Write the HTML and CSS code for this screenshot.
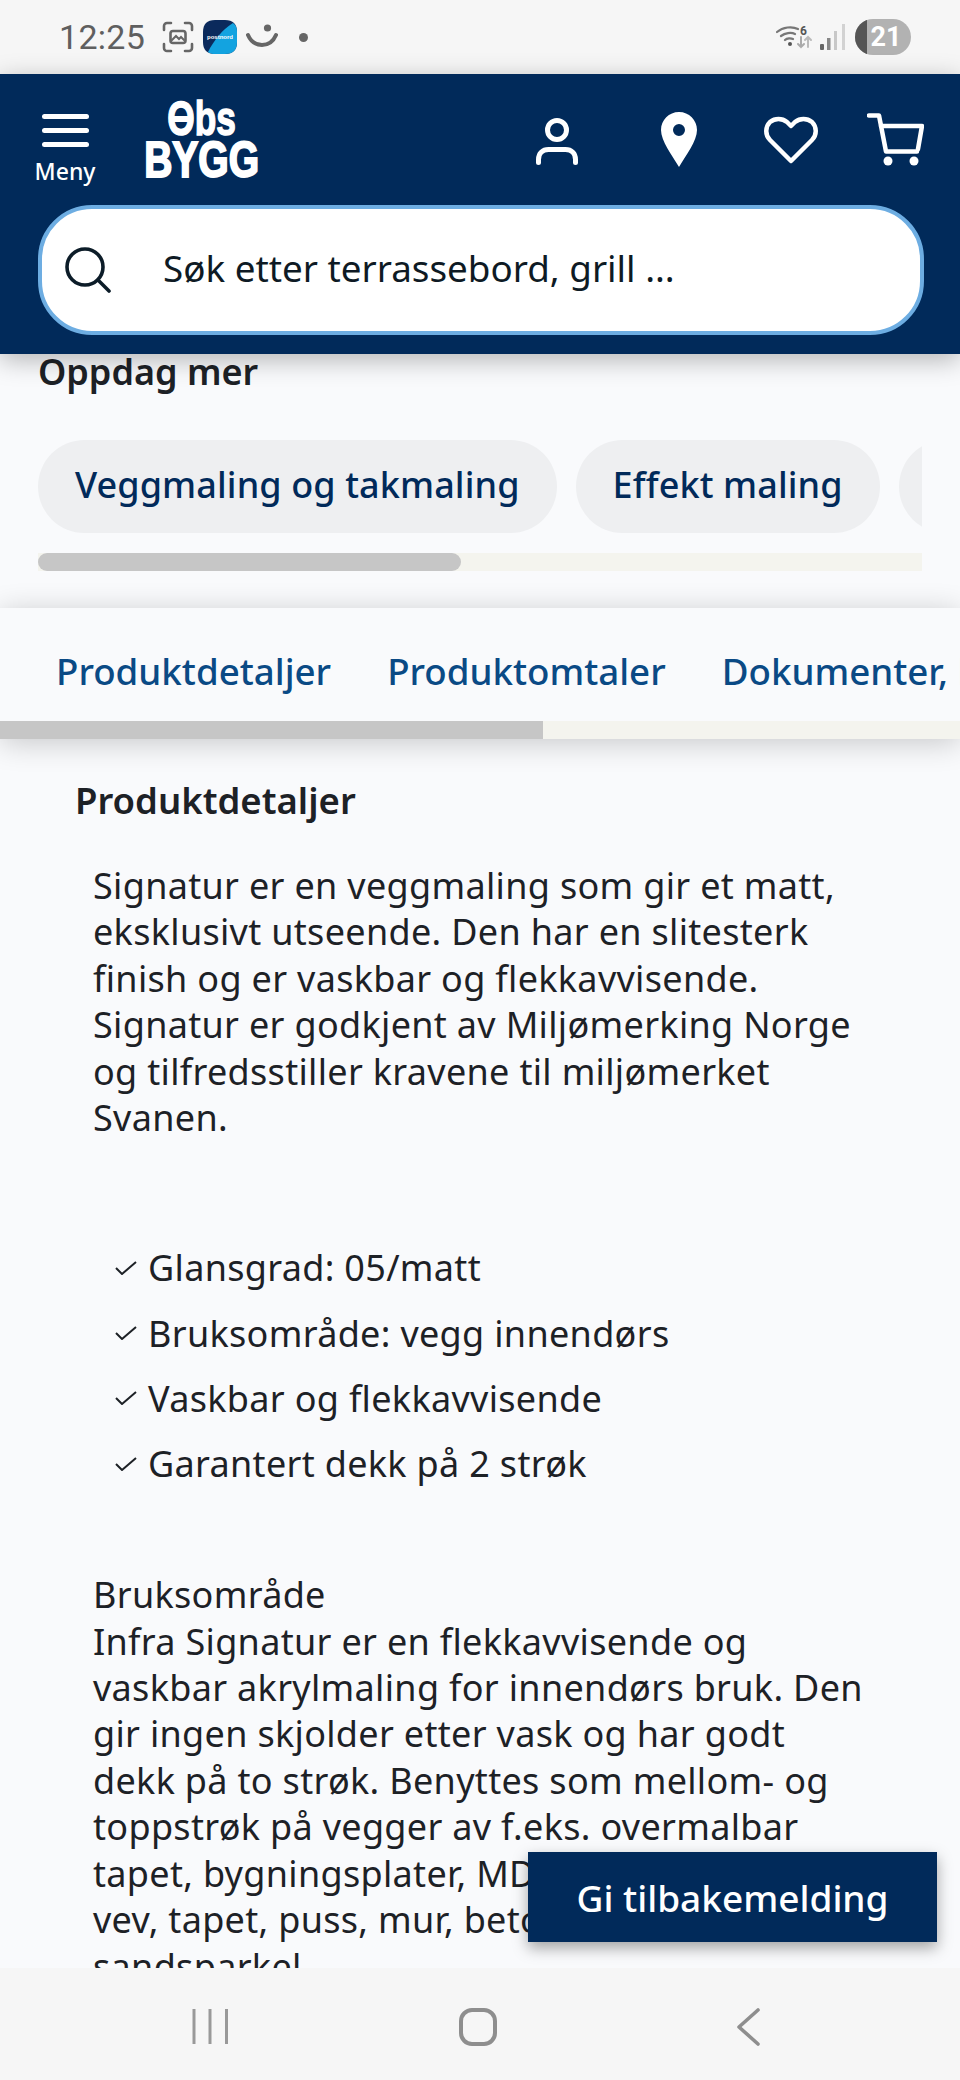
FILE: index.html
```html
<!DOCTYPE html>
<html lang="no">
<head>
<meta charset="utf-8">
<title>Obs Bygg – Produktdetaljer</title>
<link rel="stylesheet" href="styles.css">
</head>
<body>
<div class="page">
  <div class="status">
    <div class="status-left">
      <span class="time">12:25</span>
      <svg class="st-shot" viewBox="0 0 32 32" fill="none" stroke="#666" stroke-width="2.6" stroke-linecap="round"><path d="M2 9V5a3 3 0 0 1 3-3h4M23 2h4a3 3 0 0 1 3 3v4M30 23v4a3 3 0 0 1-3 3h-4M9 30H5a3 3 0 0 1-3-3v-4"/><rect x="8.500" y="10" width="15" height="12" rx="2.500"/><path d="M10 19l4-4 3 3 2-2 3 3" stroke-width="2"/></svg>
      <svg class="st-app" viewBox="0 0 34 34"><path d="M12 0h10c8 0 12 4 12 12v10c0 8-4 12-12 12H12C4 34 0 30 0 22V12C0 4 4 0 12 0z" fill="#0b2a5c"/><path d="M30 3c3 2 4 5 4 9v10c0 8-4 12-12 12H12c-3 0-5-.6-7-2 6-12 14-22 25-29z" fill="#13a3e0"/><text x="17" y="19" class="st-app-text">postnord</text></svg>
      <svg class="st-smile" viewBox="0 0 32 26" fill="none"><circle cx="21.500" cy="4" r="3.600" fill="#666"/><path d="M2 11c3 7 8 10 14 10s11-3 14-10" stroke="#666" stroke-width="4" stroke-linecap="round"/></svg>
      <span class="st-dot"></span>
    </div>
    <div class="status-right">
      <svg class="st-wifi" viewBox="0 0 36 24" fill="none" stroke-linecap="round"><path d="M1 7c6-5 15-6 21-3M5 11c4-3 10-4 14-2M9 15c2-2 6-2 8-1" stroke="#777" stroke-width="2.200"/><circle cx="14" cy="19" r="2" fill="#555"/><text x="24" y="10" class="st-wifi-text">6</text><path d="M25 12v10m-3-3l3 3 3-3" stroke="#aaa" stroke-width="2"/><path d="M32 22V12m-3 3l3-3 3 3" stroke="#bbb" stroke-width="2"/></svg>
      <svg class="st-signal" viewBox="0 0 26 26"><rect x="0" y="20" width="4" height="6" rx="1" fill="#666"/><rect x="7" y="14" width="3.500" height="12" fill="#888"/><rect x="14" y="7" width="3" height="19" fill="#c8c8c8"/><rect x="22" y="0" width="3" height="26" fill="#d2d2d2"/></svg>
      <div class="battery"><span class="battery-fill"></span><span class="battery-num">21</span></div>
    </div>
  </div>

  <header class="head">
    <div class="head-top">
      <div class="menu">
        <span class="menu-bars"><i></i><i></i><i></i></span>
        <span class="menu-label">Meny</span>
      </div>
      <div class="logo"><span class="logo-a"><span class="logo-o">O</span>bs</span><span class="logo-b">BYGG</span></div>
      <div class="head-icons">
        <svg class="ic-user" viewBox="0 0 42 47" fill="none" stroke="#fff" stroke-width="5" stroke-linecap="round"><circle cx="21" cy="12" r="9.500"/><path d="M2.500 44.500v-3c0-6 4-10 10-10h17c6 0 10 4 10 10v3"/></svg>
        <svg class="ic-pin" viewBox="0 0 36 55"><path fill="#fff" fill-rule="evenodd" d="M18 0C8 0 0 8 0 18c0 11 11 25 18 37 7-12 18-26 18-37C36 8 28 0 18 0zm0 12a6 6 0 1 1 0 12 6 6 0 0 1 0-12z"/></svg>
        <svg class="ic-heart" viewBox="0 0 54 48" fill="none" stroke="#fff" stroke-width="4.500" stroke-linejoin="round"><path d="M27 45L6 24C1 19 1 11 6 6c5-4 12-4 17 0l4 4 4-4c5-4 12-4 17 0 5 5 5 13 0 18z"/></svg>
        <svg class="ic-cart" viewBox="0 0 57 53" fill="none" stroke="#fff" stroke-width="4.500" stroke-linecap="round" stroke-linejoin="round"><path d="M2 2.500h10l7 36h31"/><path d="M14 13h41l-4 23"/><circle cx="21" cy="48" r="4.500" fill="#fff" stroke="none"/><circle cx="47" cy="48" r="4.500" fill="#fff" stroke="none"/></svg>
      </div>
    </div>
    <div class="search">
      <svg class="ic-search" viewBox="0 0 46 46" fill="none" stroke="#0c1c28" stroke-width="3.600" stroke-linecap="round"><circle cx="20" cy="20" r="18"/><path d="M33 33l11 11"/></svg>
      <span class="search-text">Søk etter terrassebord, grill ...</span>
    </div>
  </header>

  <main class="main">
    <section class="discover">
      <h2 class="discover-title">Oppdag mer</h2>
      <div class="pills">
        <span class="pill">Veggmaling og takmaling</span>
        <span class="pill">Effekt maling</span>
        <span class="pill">Tilbehør</span>
      </div>
      <div class="track"><span class="thumb thumb-pills"></span></div>
    </section>

    <nav class="tabs">
      <div class="tab-row">
        <span class="tab">Produktdetaljer</span>
        <span class="tab">Produktomtaler</span>
        <span class="tab">Dokumenter, link</span>
      </div>
      <div class="track track-tabs"><span class="thumb thumb-tabs"></span></div>
    </nav>

    <article class="details">
      <h3 class="details-title">Produktdetaljer</h3>
      <p class="copy">Signatur er en veggmaling som gir et matt,<br>eksklusivt utseende. Den har en slitesterk<br>finish og er vaskbar og flekkavvisende.<br>Signatur er godkjent av Miljømerking Norge<br>og tilfredsstiller kravene til miljømerket<br>Svanen.</p>
      <ul class="checks">
        <li><svg class="ic-check" viewBox="0 0 22 14" fill="none" stroke="#1d2126" stroke-width="2"><path d="M1 7l6 6L21 1"/></svg>Glansgrad: 05/matt</li>
        <li><svg class="ic-check" viewBox="0 0 22 14" fill="none" stroke="#1d2126" stroke-width="2"><path d="M1 7l6 6L21 1"/></svg>Bruksområde: vegg innendørs</li>
        <li><svg class="ic-check" viewBox="0 0 22 14" fill="none" stroke="#1d2126" stroke-width="2"><path d="M1 7l6 6L21 1"/></svg>Vaskbar og flekkavvisende</li>
        <li><svg class="ic-check" viewBox="0 0 22 14" fill="none" stroke="#1d2126" stroke-width="2"><path d="M1 7l6 6L21 1"/></svg>Garantert dekk på 2 strøk</li>
      </ul>
      <p class="copy copy-second">Bruksområde<br>Infra Signatur er en flekkavvisende og<br>vaskbar akrylmaling for innendørs bruk. Den<br>gir ingen skjolder etter vask og har godt<br>dekk på to strøk. Benyttes som mellom- og<br>toppstrøk på vegger av f.eks. overmalbar<br>tapet, bygningsplater, MDF, glassfiber-<br>vev, tapet, puss, mur, betong og<br>sandsparkel</p>
    </article>
  </main>

  <button class="feedback">Gi tilbakemelding</button>

  <div class="softnav">
    <svg class="nav-lines" viewBox="0 0 37 37" fill="none" stroke="#999" stroke-width="3"><path d="M2 1v35M18 1v35M34.500 1v35"/></svg>
    <svg class="nav-home" viewBox="0 0 38 38" fill="none" stroke="#8e8e8e" stroke-width="4"><rect x="2" y="2" width="34" height="34" rx="11"/></svg>
    <svg class="nav-back" viewBox="0 0 25 38" fill="none" stroke="#8e8e8e" stroke-width="3.600" stroke-linecap="round" stroke-linejoin="round"><path d="M22 2L3 19l19 17"/></svg>
  </div>
</div>
</body>
</html>
```
FILE: styles.css
```css
* { box-sizing: border-box; }
html, body { margin: 0; padding: 0; }
body { font-family: "Noto Sans", sans-serif; color: #1d2126; background: #f9fafc; }
.page { position: relative; width: 960px; height: 2080px; display: flex; flex-direction: column; overflow: hidden; }

.status { height: 74px; flex: none; background: #f6f6f6; display: flex; justify-content: space-between; align-items: center; padding: 0 49px 0 59px; }
.status-left, .status-right { display: flex; align-items: center; }
.time { font-family: Roboto, sans-serif; font-size: 34px; color: #5f5f5f; margin-right: 17px; letter-spacing: .3px; }
.st-shot { width: 32px; height: 32px; margin-right: 9px; }
.st-app { width: 34px; height: 34px; margin-right: 9px; }
.st-app-text { font: 700 6px "Liberation Sans", sans-serif; fill: #fff; text-anchor: middle; }
.st-smile { width: 32px; height: 26px; margin-right: 21px; }
.st-dot { width: 9px; height: 9px; border-radius: 50%; background: #666; }
.st-wifi { width: 36px; height: 24px; margin-right: 8px; }
.st-wifi-text { font: 700 12px Roboto, sans-serif; fill: #555; }
.st-signal { width: 26px; height: 26px; margin-right: 9px; }
.battery { position: relative; width: 56px; height: 36px; border-radius: 18px; background: #b2b2b2; overflow: hidden; display: flex; align-items: center; justify-content: center; padding-left: 6px; }
.battery-fill { width: 12px; position: absolute; left: 0; top: 0; bottom: 0; background: #555; }
.battery-num { font: 700 27px Roboto, sans-serif; color: #fff; }

.head { position: relative; z-index: 2; height: 280px; flex: none; background: #012a5a; box-shadow: 0 6px 24px rgba(0,0,0,.28); padding: 0 36px 0 38px; }
.head-top { height: 131px; display: flex; align-items: flex-start; }
.menu { width: 60px; margin-left: -3px; padding-top: 40px; display: flex; flex-direction: column; align-items: center; }
.menu-bars { width: 47px; display: flex; flex-direction: column; gap: 9px; }
.menu-bars i { display: block; height: 5px; border-radius: 3px; background: #fff; }
.menu-label { margin-top: 9px; font-size: 23px; line-height: 30px; font-weight: 500; color: #fff; }
.logo { margin-left: 51px; margin-top: 23px; width: 111px; display: flex; flex-direction: column; align-items: center; color: #fff; font-family: "Liberation Sans", sans-serif; font-weight: 700; }
.logo-a { font-size: 49px; line-height: 42px; transform: scaleX(.72); -webkit-text-stroke: 1.500px #fff; white-space: nowrap; }
.logo-o { position: relative; display: inline-block; }
.logo-o::after { content: ""; position: absolute; left: 8px; right: 8px; top: 19px; height: 6px; background: #fff; }
.logo-b { font-size: 50px; line-height: 42px; transform: scaleX(.78); -webkit-text-stroke: 2px #fff; }
.head-icons { margin-left: auto; padding-top: 38px; display: flex; align-items: center; }
.ic-user { width: 42px; height: 47px; margin-top: 4px; }
.ic-pin { width: 36px; height: 55px; margin-left: 83px; }
.ic-heart { width: 54px; height: 48px; margin-left: 67px; }
.ic-cart { width: 57px; height: 53px; margin-left: 49px; }

.search { height: 130px; border: 4px solid #6dade2; border-radius: 54px; background: #fff; display: flex; align-items: center; padding-left: 23px; }
.ic-search { width: 46px; height: 46px; flex: none; }
.search-text { margin-left: 52px; font-size: 36.800px; color: #0e1a24; position: relative; top: -2px; }

.main { flex: 1; min-height: 0; overflow: hidden; }
.discover { padding: 0 38px; }
.discover-title { margin: 0; font-size: 36px; line-height: 36px; font-weight: 600; color: #1d2126; }
.pills { margin-top: 50px; display: flex; gap: 19px; overflow: hidden; }
.pill { flex: none; height: 93px; border-radius: 47px; padding: 0 37px 5px; background: #eeeff1; color: #012a5a; font-size: 36px; letter-spacing: .1px; font-weight: 500; display: flex; align-items: center; }
.track { margin-top: 20px; height: 18px; background: #f4f4ee; }
.thumb { display: block; height: 100%; background: #c6c6c6; }
.thumb-pills { width: 423px; border-radius: 9px; }
.tabs { position: relative; margin-top: 37px; background: #f9fafc; box-shadow: 0 4px 28px rgba(0,0,0,.2); }
.tab-row { height: 113px; padding: 12px 0 0 56px; display: flex; gap: 56px; align-items: center; overflow: hidden; white-space: nowrap; }
.tab { flex: none; font-size: 36.700px; font-weight: 500; color: #0a4a85; }
.track-tabs { margin-top: 0; }
.thumb-tabs { width: 543px; }

.details { padding: 38px 0 0 75px; }
.details-title { margin: 0; font-size: 36.500px; line-height: 46px; font-weight: 600; }
.copy { margin: 40px 0 0 18px; font-size: 36px; letter-spacing: .32px; line-height: 46.400px; white-space: nowrap; }
.checks { list-style: none; margin: 94px 0 0 40px; padding: 0; font-size: 36px; letter-spacing: .32px; line-height: 65.200px; }
.checks li { display: flex; align-items: center; white-space: nowrap; }
.ic-check { width: 22px; height: 14px; margin-right: 11px; flex: none; }
.copy-second { margin-top: 76px; }

.feedback { position: absolute; z-index: 3; left: 528px; top: 1852px; width: 409px; height: 90px; border: 0; padding: 0; background: #012a5a; color: #fff; font-family: "Noto Sans", sans-serif; font-size: 37px; font-weight: 500; box-shadow: 0 6px 14px rgba(0,0,0,.35); }

.softnav { position: relative; z-index: 2; height: 112px; flex: none; background: #f6f6f6; display: flex; align-items: flex-start; padding-top: 40px; }
.nav-lines { width: 37px; height: 37px; margin-left: 192px; }
.nav-home { width: 38px; height: 38px; margin-left: 230px; }
.nav-back { width: 25px; height: 38px; margin-left: 239px; }
```
